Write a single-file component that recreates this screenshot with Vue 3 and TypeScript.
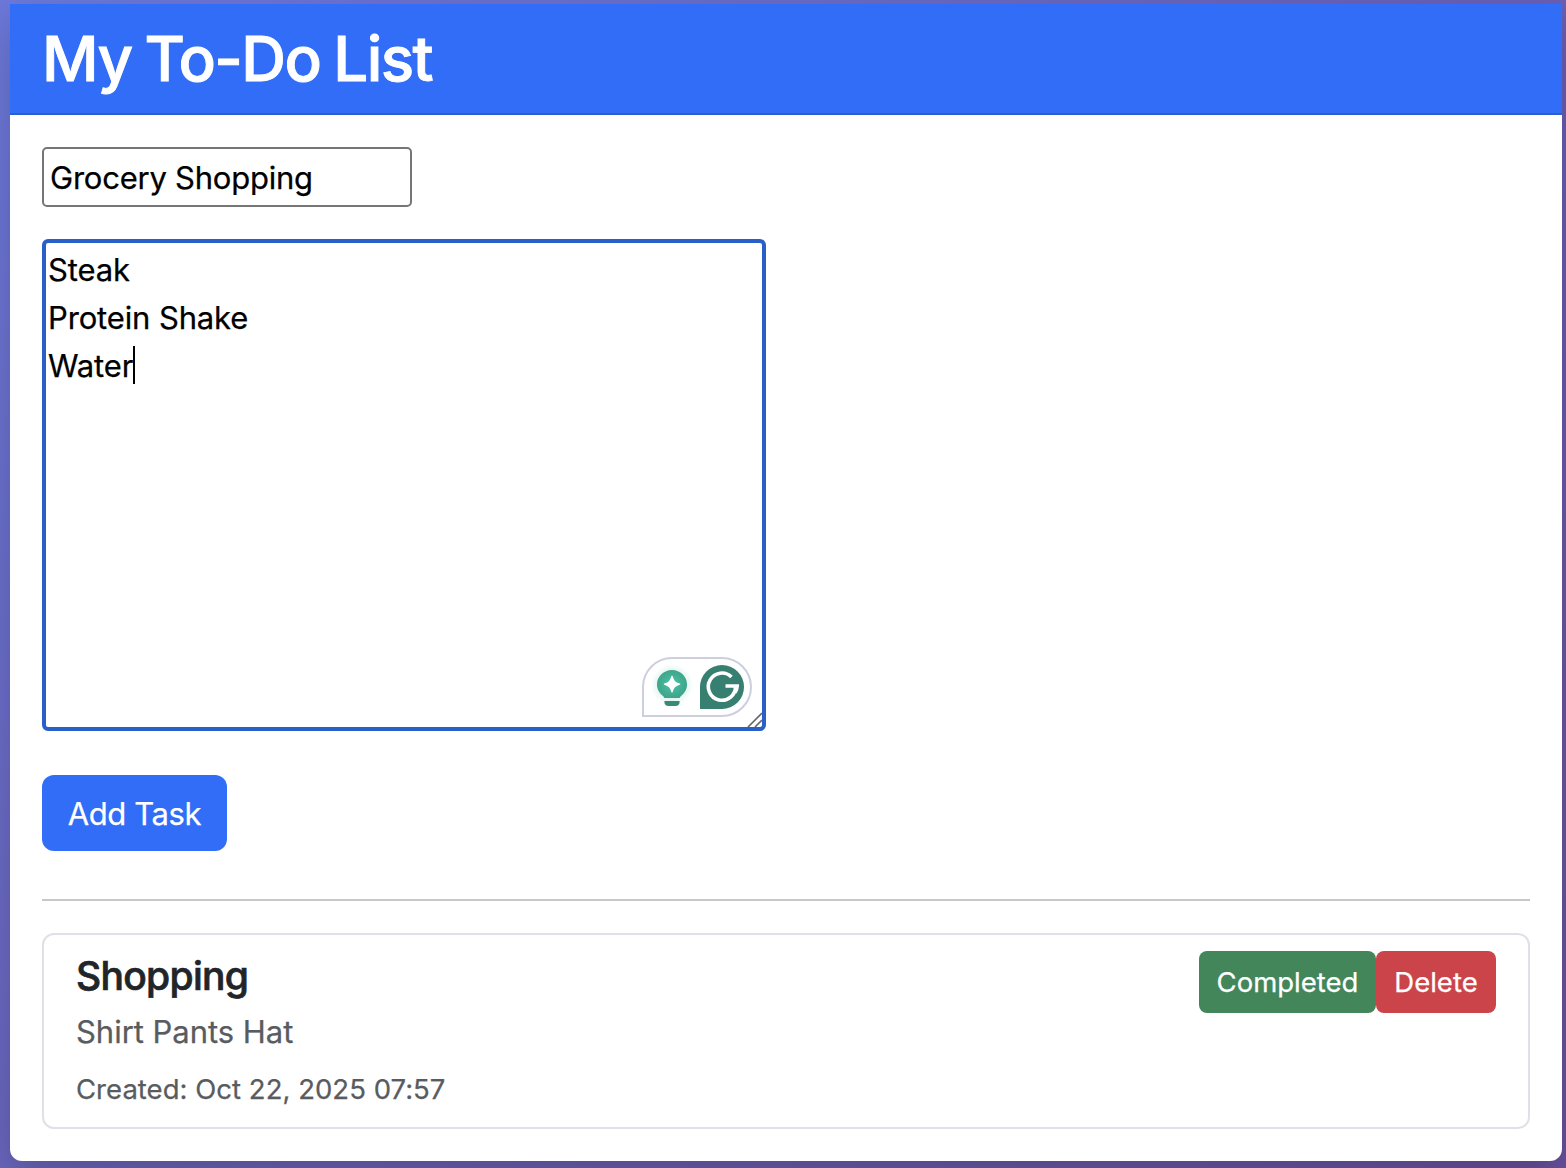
<script setup lang="ts">
import { ref } from 'vue'

interface Task {
  id: number
  title: string
  description: string
  created: string
}

const title = ref('Grocery Shopping')
const lines = ref<string[]>(['Steak', 'Protein Shake', 'Water'])
const tasks = ref<Task[]>([
  { id: 1, title: 'Shopping', description: 'Shirt Pants Hat', created: 'Oct 22, 2025 07:57' },
])
</script>

<template>
  <div class="page">
    <main class="card">
      <header class="card-header"><h1>My To-Do List</h1></header>
      <section class="card-body">
        <div class="title-field">{{ title }}</div>
        <div class="editor">
          <div v-for="(line, i) in lines" :key="i" class="line">
            <span>{{ line }}</span><i v-if="i === lines.length - 1" class="caret"></i>
          </div>
          <svg class="assistant" width="110" height="60" viewBox="0 0 110 60">
            <defs>
              <radialGradient id="bulb" cx="50%" cy="50%" r="55%">
                <stop offset="0" stop-color="#45c6a8" />
                <stop offset="1" stop-color="#40a087" />
              </radialGradient>
              <radialGradient id="glow">
                <stop offset="0.55" stop-color="#45c6a8" stop-opacity="0.22" />
                <stop offset="1" stop-color="#45c6a8" stop-opacity="0" />
              </radialGradient>
            </defs>
            <path d="M1 59V30A29 29 0 0 1 30 1H80A29 29 0 0 1 80 59Z" fill="#fff" stroke="#cdcfdf" stroke-width="2" />
            <circle cx="30" cy="28" r="21" fill="url(#glow)" />
            <path d="M30 13C21.700 13 15 19.500 15 27.500C15 33 18 36.500 20.500 38.500Q22 39.700 22.400 41H37.600Q38 39.700 39.500 38.500C42 36.500 45 33 45 27.500C45 19.500 38.300 13 30 13Z" fill="url(#bulb)" />
            <path d="M22.400 44H37.600V45C37.600 47.500 36 49 33.500 49H26.500C24 49 22.400 47.500 22.400 45Z" fill="#388a74" />
            <path d="M30 19.500C31.500 24.500 32.700 25.700 37.500 27.200C32.700 28.700 31.500 29.900 30 34.900C28.500 29.900 27.300 28.700 22.500 27.200C27.300 25.700 28.500 24.500 30 19.500Z" fill="#fff" stroke="#fff" stroke-width="1.400" stroke-linejoin="round" />
            <path d="M58 52V30A22 22 0 1 1 80 52Z" fill="#377f71" />
            <path d="M89.500 20A13.600 13.600 0 1 0 93.500 29M83.500 29H95.200M93.600 29L95.200 29Q95.200 32 93 35.500" fill="none" stroke="#fff" stroke-width="3.600" />
          </svg>
          <svg class="grip" width="16" height="16" viewBox="0 0 16 16">
            <path d="M2 16L16 2M9 16L16 9" stroke="#666" stroke-width="1.600" />
          </svg>
        </div>
        <button class="btn add" type="button"><span>Add Task</span></button>
        <hr />
        <article v-for="task in tasks" :key="task.id" class="task">
          <div class="info">
            <h2><span>{{ task.title }}</span></h2>
            <p class="desc"><span>{{ task.description }}</span></p>
            <p class="date"><span>Created: {{ task.created }}</span></p>
          </div>
          <div class="actions">
            <button class="btn done" type="button"><span>Completed</span></button>
            <button class="btn delete" type="button"><span>Delete</span></button>
          </div>
        </article>
      </section>
    </main>
  </div>
</template>

<style>
body {
  margin: 0;
  overflow: hidden;
}
</style>

<style scoped>
* {
  box-sizing: border-box;
}
.page {
  height: 1168px;
  padding: 4px 4px 7px 10px;
  overflow: hidden;
  background: linear-gradient(135deg, #6c79da 0%, #6962b8 50%, #69509f 100%);
  font-family: Inter, "Liberation Sans", sans-serif;
  font-size: 31px;
  color: #212529;
  -webkit-text-stroke: 0.250px currentColor;
}
.card {
  height: 1157px;
  background: #fff;
  border-radius: 0 0 12px 12px;
  box-shadow: 0 16px 40px rgba(0, 0, 0, 0.2);
}
.card-header {
  height: 111px;
  padding: 16px 32px;
  background: #316df6;
  border-bottom: 2px solid #2b5fd0;
}
h1 {
  margin: 0;
  font-size: 62px;
  font-weight: 500;
  line-height: 78px;
  letter-spacing: -1.600px;
  word-spacing: -2px;
  white-space: nowrap;
  color: #fff;
  -webkit-text-stroke: 0.900px #fff;
}
.card-body {
  display: flex;
  flex-direction: column;
  align-items: flex-start;
  padding: 32px;
}
.title-field {
  width: 370px;
  height: 60px;
  padding: 0 6px;
  border: 2px solid #767676;
  border-radius: 5px;
  line-height: 58px;
  letter-spacing: -0.230px;
  white-space: nowrap;
  color: #000;
}
.editor {
  position: relative;
  width: 724px;
  height: 492px;
  margin-top: 32px;
  padding: 3px 2px;
  border: 4px solid #285fc8;
  border-radius: 6px;
  letter-spacing: -0.140px;
  color: #000;
}
.line {
  display: flex;
  align-items: center;
  height: 48px;
  line-height: 48px;
}
.caret {
  width: 2px;
  height: 38px;
  margin-bottom: 2px;
  background: #000;
}
.assistant {
  position: absolute;
  right: 10px;
  bottom: 10px;
}
.grip {
  position: absolute;
  right: 0;
  bottom: 0;
}
.btn {
  border: 0;
  padding: 0;
  font-family: inherit;
  color: #fff;
  white-space: nowrap;
}
.add {
  width: 185px;
  height: 76px;
  margin-top: 44px;
  border-radius: 12px;
  background: #316df6;
  font-size: 31px;
  letter-spacing: -0.400px;
}
hr {
  width: 100%;
  height: 2px;
  margin: 48px 0 32px;
  border: 0;
  background: #c7c8c9;
}
.task {
  display: flex;
  justify-content: space-between;
  width: 100%;
  height: 196px;
  padding: 16px 32px;
  border: 2px solid #dee2e6;
  border-radius: 12px;
}
h2 {
  margin: 0;
  font-size: 39px;
  font-weight: 500;
  line-height: 50px;
  letter-spacing: -0.700px;
  -webkit-text-stroke: 0.700px currentColor;
}
.desc,
.date {
  margin: 0;
  color: #595c5f;
}
.desc {
  margin-top: 7px;
  line-height: 48px;
  letter-spacing: -0.030px;
}
.date {
  margin-top: 12px;
  font-size: 27.500px;
  line-height: 42px;
  letter-spacing: 0.030px;
}
.actions {
  display: flex;
  align-items: flex-start;
}
.done,
.delete {
  height: 62px;
  border-radius: 8px;
  font-size: 27.500px;
}
.done {
  width: 177px;
  background: #42865a;
}
.delete {
  width: 120px;
  background: #cb444a;
}
</style>
